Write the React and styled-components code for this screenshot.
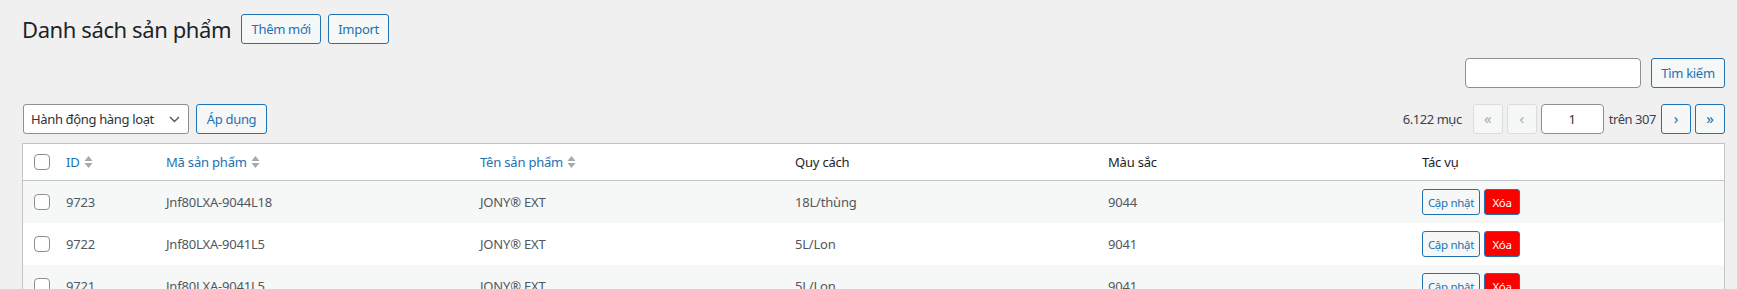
import React from "react";
import styled, { createGlobalStyle } from "styled-components";

const GlobalStyle = createGlobalStyle`
  html, body {
    margin: 0;
    padding: 0;
    overflow: hidden;
  }
  body {
    background: #f0f0f1;
    color: #3c434a;
    font-family: "Noto Sans", "Open Sans", sans-serif;
    font-size: 13px;
    letter-spacing: -0.2px;
  }
`;

const products = [
  { id: 9723, code: "Jnf80LXA-9044L18", name: "JONY® EXT", spec: "18L/thùng", color: "9044" },
  { id: 9722, code: "Jnf80LXA-9041L5", name: "JONY® EXT", spec: "5L/Lon", color: "9041" },
  { id: 9721, code: "Jnf80LXA-9041L5", name: "JONY® EXT", spec: "5L/Lon", color: "9041" },
];

const columns = [
  { label: "ID", sortable: true },
  { label: "Mã sản phẩm", sortable: true },
  { label: "Tên sản phẩm", sortable: true },
  { label: "Quy cách" },
  { label: "Màu sắc" },
  { label: "Tác vụ" },
];

const SortIcon = () => (
  <svg width="9" height="14" viewBox="0 0 9 14">
    <path d="M4.5 1 L8.5 6 L0.5 6 Z" fill="#a7aaad" />
    <path d="M4.5 13 L8.5 8 L0.5 8 Z" fill="#a7aaad" />
  </svg>
);

const Chevron = () => (
  <svg width="11" height="7" viewBox="0 0 11 7">
    <path d="M1 1 L5.5 5.5 L10 1" fill="none" stroke="#50575e" strokeWidth="1.4" />
  </svg>
);

const App = () => {
  return (
    <Wrap>
      <GlobalStyle />
      <HeaderBar>
        <Title>Danh sách sản phẩm</Title>
        <Button width={80}>Thêm mới</Button>
        <Button width={61}>Import</Button>
      </HeaderBar>

      <SearchBar>
        <TextInput width={176} />
        <Button width={74}>Tìm kiếm</Button>
      </SearchBar>

      <TableNav>
        <NavGroup>
          <Select>
            <span>Hành động hàng loạt</span>
            <Chevron />
          </Select>
          <Button width={71}>Áp dụng</Button>
        </NavGroup>
        <NavGroup>
          <Count space={7}>6.122 mục</Count>
          <PageButton disabled>«</PageButton>
          <PageButton disabled>‹</PageButton>
          <TextInput width={63} center defaultValue="1" />
          <Count space={1}>trên 307</Count>
          <PageButton>›</PageButton>
          <PageButton>»</PageButton>
        </NavGroup>
      </TableNav>

      <Table>
        <HeadRow>
          <CheckCell>
            <Checkbox />
          </CheckCell>
          {columns.map((col) => (
            <HeadCell key={col.label} link={col.sortable}>
              {col.label}
              {col.sortable && <SortIcon />}
            </HeadCell>
          ))}
        </HeadRow>
        {products.map((p, i) => (
          <Row key={p.id + "-" + i} striped={i % 2 === 0}>
            <CheckCell>
              <Checkbox />
            </CheckCell>
            <Cell>{p.id}</Cell>
            <Cell>{p.code}</Cell>
            <Cell>{p.name}</Cell>
            <Cell>{p.spec}</Cell>
            <Cell>{p.color}</Cell>
            <Cell>
              <Actions>
                <SmallButton width={58}>Cập nhật</SmallButton>
                <SmallButton width={36} danger>Xóa</SmallButton>
              </Actions>
            </Cell>
          </Row>
        ))}
      </Table>
    </Wrap>
  );
};

const Wrap = styled.div`
  padding: 0 12px 0 22px;
`;

const HeaderBar = styled.div`
  display: flex;
  align-items: center;
  gap: 7px;
  padding-top: 14px;
  height: 30px;
`;

const Title = styled.h1`
  margin: 0 3px 0 0;
  font-size: 22px;
  font-weight: 400;
  letter-spacing: -0.4px;
  color: #1d2327;
  line-height: 30px;
  white-space: nowrap;
`;

const Button = styled.button`
  box-sizing: border-box;
  height: 30px;
  ${(p) => (p.width ? `width: ${p.width}px;` : "")}
  padding: 0;
  border: 1px solid #2271b1;
  border-radius: 3px;
  background: #f6f7f7;
  color: #2271b1;
  font-family: inherit;
  font-size: 13px;
  letter-spacing: -0.3px;
  white-space: nowrap;
`;

const SearchBar = styled.div`
  display: flex;
  justify-content: flex-end;
  gap: 10px;
  margin-top: 14px;
`;

const TextInput = styled.input`
  box-sizing: border-box;
  width: ${(p) => p.width}px;
  height: 30px;
  border: 1px solid #8c8f94;
  border-radius: 4px;
  background: #fff;
  font-family: inherit;
  font-size: 13px;
  color: #2c3338;
  text-align: ${(p) => (p.center ? "center" : "left")};
  padding: 0 8px;
`;

const TableNav = styled.div`
  display: flex;
  justify-content: space-between;
  align-items: center;
  margin-top: 16px;
  height: 30px;
`;

const NavGroup = styled.div`
  display: flex;
  align-items: center;
  gap: 4px;
`;

const Select = styled.div`
  box-sizing: border-box;
  display: flex;
  align-items: center;
  justify-content: space-between;
  width: 166px;
  height: 30px;
  margin-left: 1px;
  margin-right: 3px;
  padding: 0 8px 0 7px;
  border: 1px solid #8c8f94;
  border-radius: 3px;
  background: #fff;
  color: #2c3338;
  font-size: 13px;
  letter-spacing: -0.35px;
  white-space: nowrap;
`;

const Count = styled.span`
  color: #3c434a;
  margin: 0 ${(p) => p.space}px 0 ${(p) => p.space}px;
  letter-spacing: -0.45px;
  white-space: nowrap;
`;

const PageButton = styled.button`
  box-sizing: border-box;
  width: 30px;
  height: 30px;
  padding: 0 0 2px;
  border: 1px solid ${(p) => (p.disabled ? "#dcdcde" : "#2271b1")};
  border-radius: 3px;
  background: #f6f7f7;
  color: ${(p) => (p.disabled ? "#a7aaad" : "#2271b1")};
  font-family: inherit;
  font-size: 15px;
`;

const Table = styled.div`
  margin-top: 9px;
  border: 1px solid #c3c4c7;
  background: #fff;
`;

const grid = `
  display: grid;
  grid-template-columns: 33px 100px 314px 315px 313px 314px 1fr;
  align-items: center;
`;

const HeadRow = styled.div`
  ${grid}
  height: 36px;
  border-bottom: 1px solid #c3c4c7;
`;

const Row = styled.div`
  ${grid}
  height: 42px;
  background: ${(p) => (p.striped ? "#f6f7f7" : "#fff")};
`;

const HeadCell = styled.div`
  display: flex;
  align-items: center;
  gap: 4px;
  padding: 0 10px;
  font-size: 13px;
  white-space: nowrap;
  color: ${(p) => (p.link ? "#2271b1" : "#1d2327")};
`;

const Cell = styled.div`
  padding: 0 10px;
  color: #50575e;
  font-size: 13px;
  white-space: nowrap;
`;

const CheckCell = styled.div`
  display: flex;
  align-items: center;
  padding-left: 11px;
`;

const Checkbox = styled.span`
  box-sizing: border-box;
  display: block;
  width: 16px;
  height: 16px;
  border: 1px solid #8c8f94;
  border-radius: 4px;
  background: #fff;
`;

const Actions = styled.div`
  display: flex;
  gap: 4px;
`;

const SmallButton = styled.button`
  box-sizing: border-box;
  width: ${(p) => p.width}px;
  height: 26px;
  padding: 0;
  border: 1px solid #2271b1;
  border-radius: 3px;
  background: ${(p) => (p.danger ? "#ff0000" : "#f6f7f7")};
  color: ${(p) => (p.danger ? "#fff" : "#2271b1")};
  font-family: inherit;
  font-size: 11.5px;
  letter-spacing: -0.3px;
  white-space: nowrap;
`;

export default App;
